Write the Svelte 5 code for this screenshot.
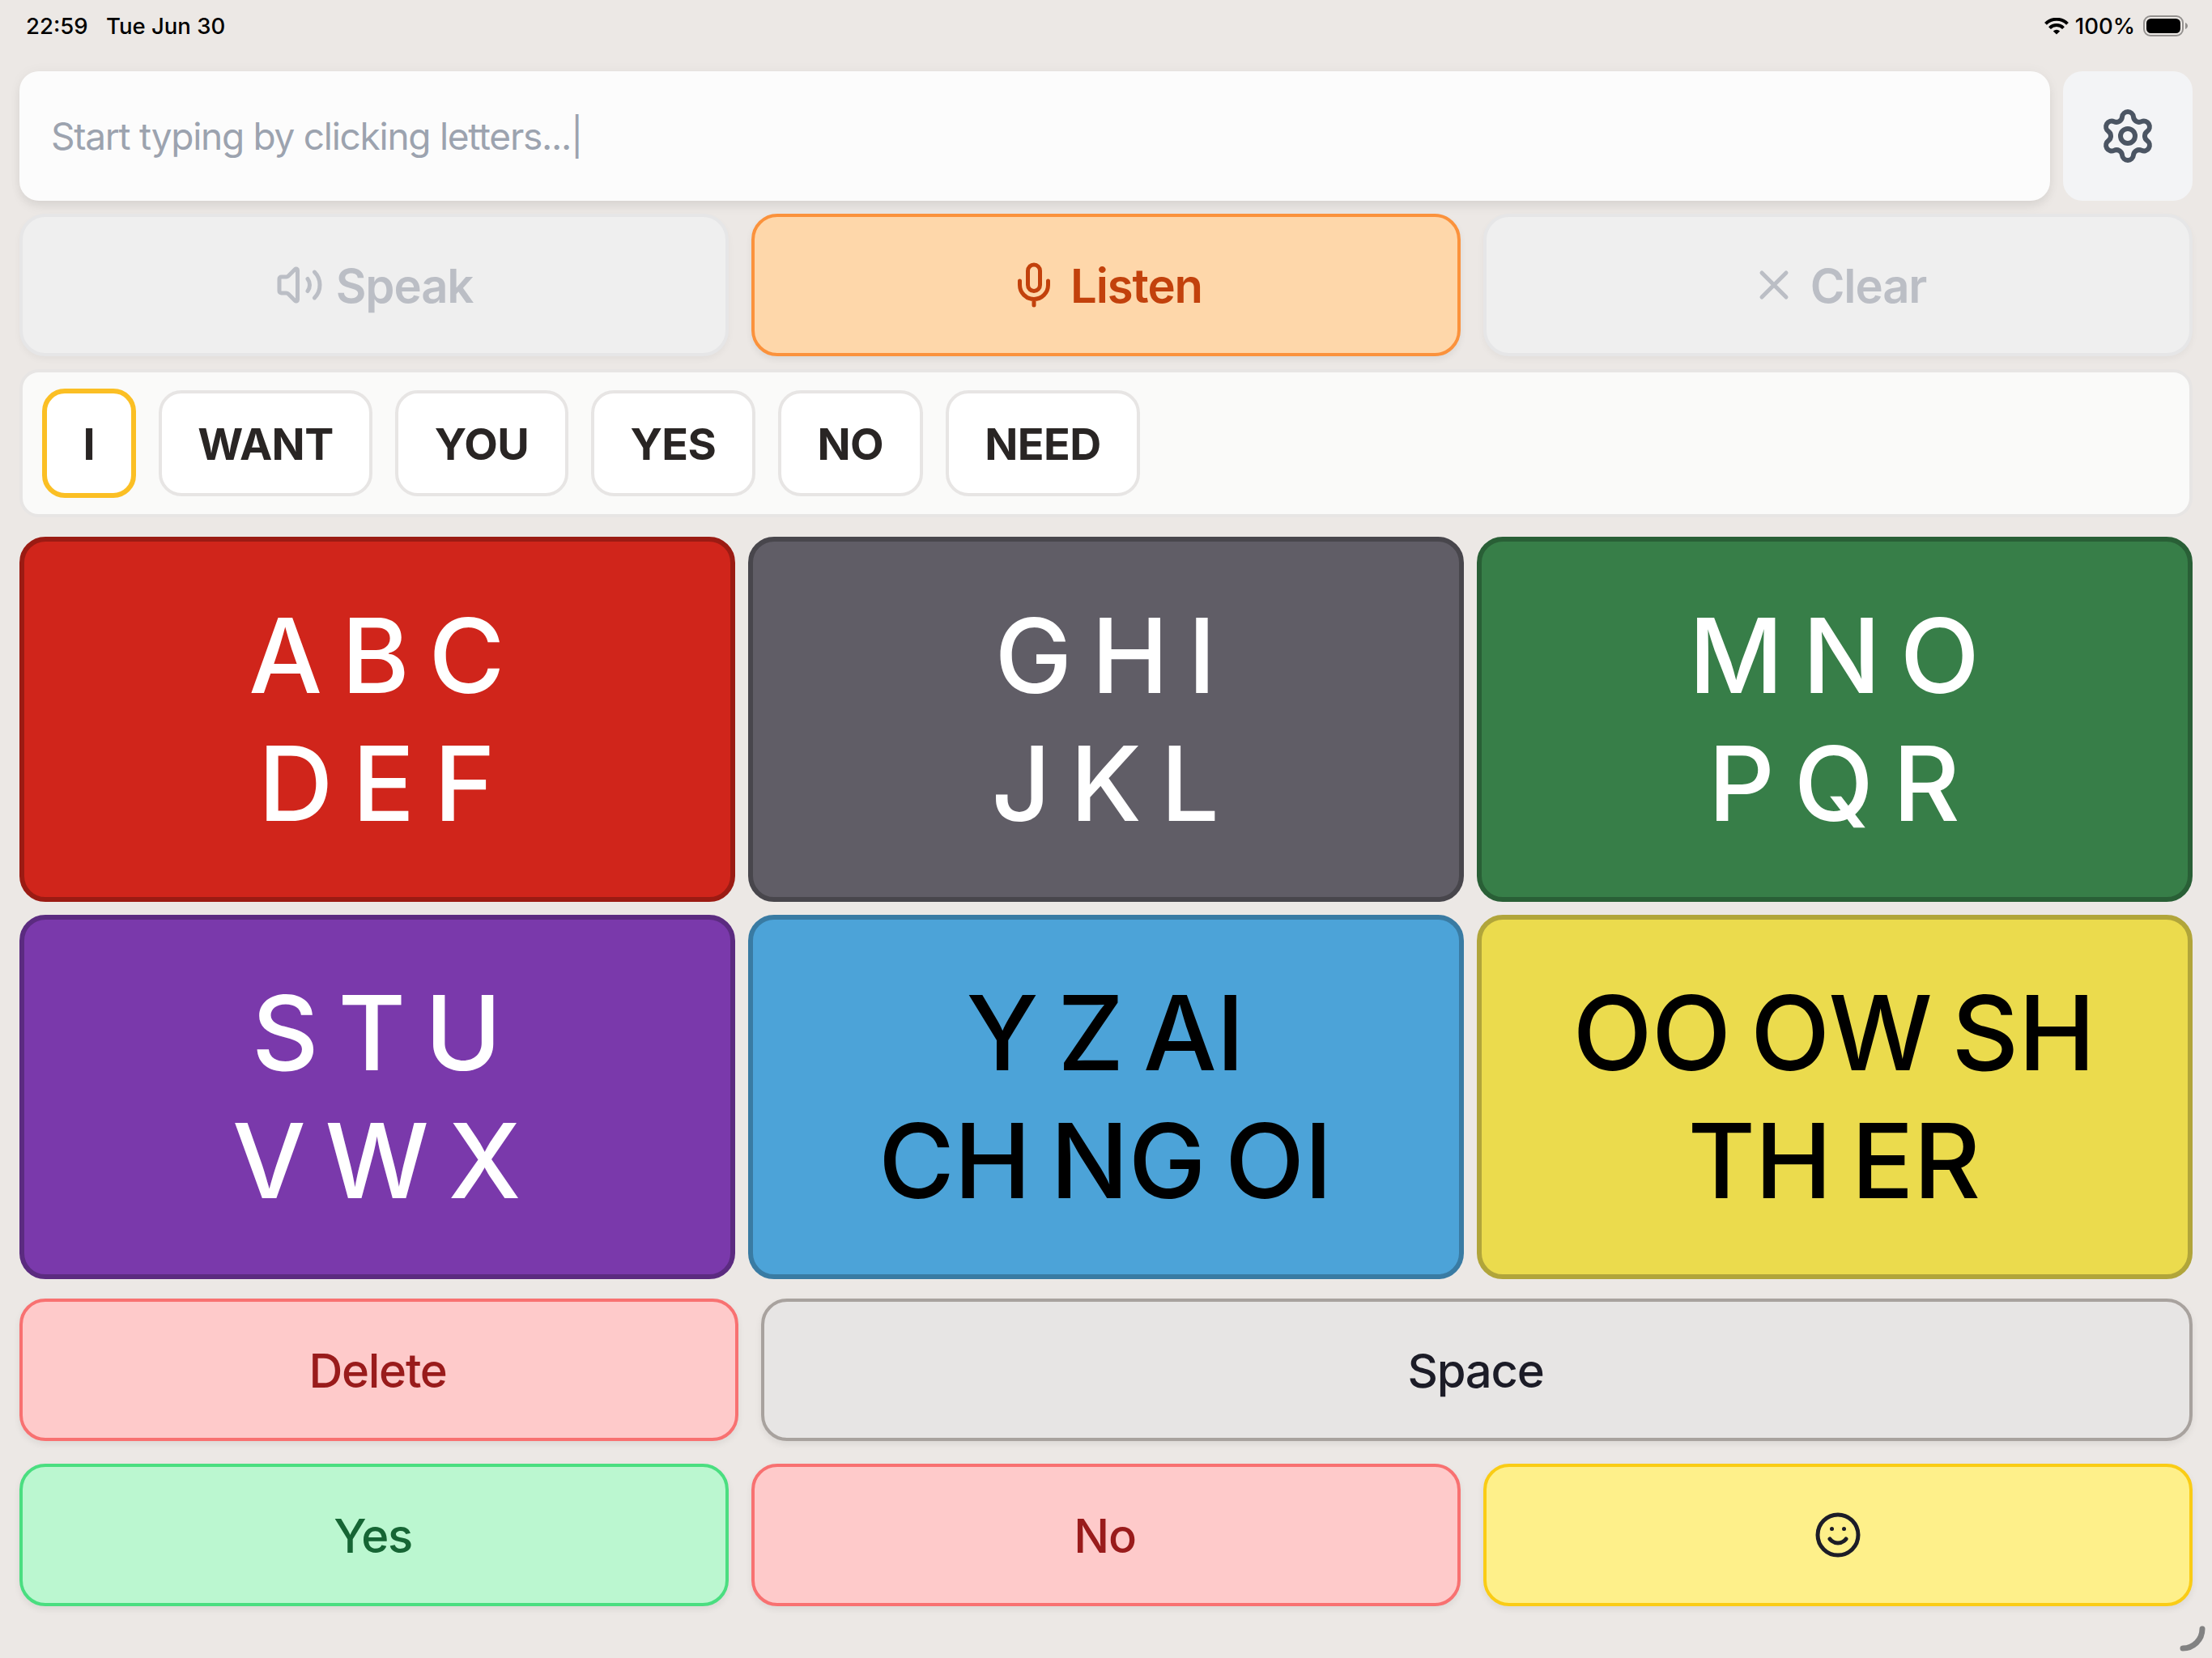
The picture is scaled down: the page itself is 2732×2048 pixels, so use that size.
<script lang="ts">
	interface KeyGroup {
		name: string;
		lines: string[];
	}

	const suggestions = ['I', 'WANT', 'YOU', 'YES', 'NO', 'NEED'];

	const groups: KeyGroup[] = [
		{ name: 'red', lines: ['A B C', 'D E F'] },
		{ name: 'gray', lines: ['G H I', 'J K L'] },
		{ name: 'green', lines: ['M N O', 'P Q R'] },
		{ name: 'purple', lines: ['S T U', 'V W X'] },
		{ name: 'blue', lines: ['Y Z AI', 'CH NG OI'] },
		{ name: 'yellow', lines: ['OO OW SH', 'TH ER'] }
	];

	let text = $state('');
	let highlighted = $state(0);
</script>

<div class="screen">
	<header class="status">
		<span class="time">22:59</span>
		<span class="date">Tue Jun 30</span>
		<svg class="wifi" viewBox="0 0 30 21">
			<path d="M1.500 7.400a18.900 18.900 0 0 1 27 0" />
			<path d="M6.500 12.600a11.900 11.900 0 0 1 17 0" />
			<path class="dot" d="M15 20.500l-4.200-4a6 6 0 0 1 8.400 0z" />
		</svg>
		<span class="percent">100%</span>
		<svg class="battery" viewBox="0 0 56 26">
			<rect class="shell" x="1" y="1" width="48" height="24" rx="8" />
			<rect x="4" y="4" width="42" height="18" rx="5.5" />
			<path class="cap" d="M52 9c4 1.500 4 6.500 0 8z" />
		</svg>
	</header>

	<main>
		<div class="top">
			<div class="input">
				{#if text}{text}{:else}<span class="placeholder">Start typing by clicking letters...|</span>{/if}
			</div>
			<button class="settings" aria-label="Settings">
				<svg viewBox="0 0 24 24">
					<path d="M9.671 4.136a2.340 2.340 0 0 1 4.659 0 2.340 2.340 0 0 0 3.319 1.915 2.340 2.340 0 0 1 2.330 4.033 2.340 2.340 0 0 0 0 3.831 2.340 2.340 0 0 1-2.330 4.033 2.340 2.340 0 0 0-3.319 1.915 2.340 2.340 0 0 1-4.659 0 2.340 2.340 0 0 0-3.320-1.915 2.340 2.340 0 0 1-2.330-4.033 2.340 2.340 0 0 0 0-3.831A2.340 2.340 0 0 1 6.350 6.051a2.340 2.340 0 0 0 3.319-1.915" />
					<circle cx="12" cy="12" r="3" />
				</svg>
			</button>
		</div>

		<div class="row actions">
			<button class="action" disabled>
				<svg class="speaker" viewBox="0 0 24 24">
					<path d="M11 4.702a.705.705 0 0 0-1.203-.498L6.413 7.587A1.400 1.400 0 0 1 5.416 8H3a1 1 0 0 0-1 1v6a1 1 0 0 0 1 1h2.416a1.400 1.400 0 0 1 .997.413l3.383 3.384A.705.705 0 0 0 11 19.298z" />
					<path d="M16 9a5 5 0 0 1 0 6M19.364 18.364a9 9 0 0 0 0-12.728" />
				</svg>
				<span>Speak</span>
			</button>
			<button class="action listen">
				<svg class="mic" viewBox="0 0 24 24">
					<path d="M12 19v3M19 10v2a7 7 0 0 1-14 0v-2" />
					<rect x="9" y="2" width="6" height="13" rx="3" />
				</svg>
				<span>Listen</span>
			</button>
			<button class="action" disabled>
				<svg class="cross" viewBox="0 0 24 24">
					<path d="M18 6 6 18M6 6l12 12" />
				</svg>
				<span>Clear</span>
			</button>
		</div>

		<div class="suggestions">
			{#each suggestions as word, i}
				<button class="chip" class:highlighted={i === highlighted}>{word}</button>
			{/each}
		</div>

		<div class="groups">
			{#each groups as group}
				<button class="group {group.name}">
					{#each group.lines as line}
						<span>{line}</span>
					{/each}
				</button>
			{/each}
		</div>

		<div class="row editing">
			<button class="key danger">Delete</button>
			<button class="key space">Space</button>
		</div>

		<div class="row">
			<button class="key yes">Yes</button>
			<button class="key danger">No</button>
			<button class="key emoji" aria-label="Emoji">
				<svg viewBox="0 0 24 24">
					<circle cx="12" cy="12" r="10" />
					<path d="M8 14s1.500 2 4 2 4-2 4-2M9 9h.01M15 9h.01" />
				</svg>
			</button>
		</div>
	</main>

	<svg class="corner" viewBox="0 0 32 32">
		<path d="M28 4A24 24 0 0 1 4 28" />
	</svg>
</div>

<style>
	:global(body) {
		background: #ece8e5;
	}

	.screen {
		position: relative;
		box-sizing: border-box;
		width: 2732px;
		height: 2048px;
		background: #ece8e5;
		font-family: Inter, 'Liberation Sans', sans-serif;
		overflow: hidden;
	}

	button {
		box-sizing: border-box;
		margin: 0;
		padding: 0;
		font-family: inherit;
		color: inherit;
	}

	svg {
		flex: none;
		fill: none;
		stroke: currentColor;
		stroke-width: 2;
		stroke-linecap: round;
		stroke-linejoin: round;
	}

	.status {
		display: flex;
		align-items: center;
		box-sizing: border-box;
		height: 88px;
		padding: 0 29px 24px 32px;
		font-size: 27.5px;
		font-weight: 500;
		color: #000;
	}

	.time {
		width: 99px;
	}

	.wifi {
		width: 30px;
		height: 21px;
		margin-left: auto;
		stroke-width: 4;
		stroke-linecap: butt;
	}

	.wifi .dot {
		fill: #000;
		stroke: none;
	}

	.percent {
		margin: 0 10px 0 8px;
	}

	.battery {
		width: 56px;
		height: 26px;
		fill: #000;
		stroke: none;
	}

	.battery .shell {
		fill: none;
		stroke: #94918f;
		stroke-width: 2;
	}

	.battery .cap {
		fill: #94918f;
	}

	main {
		padding: 0 24px;
	}

	.top {
		display: flex;
		gap: 16px;
		height: 160px;
		margin-bottom: 16px;
	}

	.input {
		flex: 1;
		display: flex;
		align-items: center;
		padding-left: 39px;
		border-radius: 24px;
		background: #fcfcfc;
		box-shadow: 0 8px 14px -2px rgba(0, 0, 0, 0.08), 0 0 16px rgba(0, 0, 0, 0.04);
		font-size: 46px;
		letter-spacing: -1.27px;
	}

	.placeholder {
		color: #9ca3af;
	}

	.settings {
		display: grid;
		place-items: center;
		width: 160px;
		border: 0;
		border-radius: 24px;
		background: #f3f4f6;
		color: #4b5563;
	}

	.settings svg {
		width: 72px;
		height: 72px;
	}

	.row {
		display: grid;
		grid-template-columns: repeat(3, 1fr);
		gap: 28px;
		height: 176px;
	}

	.action,
	.key {
		display: flex;
		align-items: center;
		justify-content: center;
		border: 4px solid;
		border-radius: 32px;
		box-shadow: 0 4px 8px rgba(0, 0, 0, 0.07);
		font-size: 58px;
		font-weight: 500;
		letter-spacing: -1.3px;
	}

	.key {
		padding: 2px 3px 0 0;
	}

	.action {
		border-color: #e6e6e7;
		background: #efefef;
		box-shadow: 0 4px 8px rgba(0, 0, 0, 0.04);
		color: #bbbec5;
		font-weight: 600;
		letter-spacing: -1.1px;
	}

	.action span {
		padding-top: 2px;
	}

	.listen {
		border-color: #fb923c;
		background: #fed7aa;
		box-shadow: 0 4px 8px rgba(0, 0, 0, 0.07);
		color: #c2410c;
	}

	.action svg {
		width: 60px;
		height: 60px;
		margin-right: 15px;
	}

	.suggestions {
		display: flex;
		align-items: center;
		gap: 28px;
		box-sizing: border-box;
		height: 183px;
		margin: 16px 0 24px;
		padding: 0 24px;
		border: 4px solid #e7e5e4;
		border-radius: 24px;
		background: #fafaf9;
	}

	.chip {
		height: 131px;
		padding: 2px 44.6px 0;
		border: 4px solid #e7e5e4;
		border-radius: 28px;
		background: #fff;
		font-size: 54px;
		font-weight: 700;
		letter-spacing: -0.6px;
		color: #292524;
	}

	.chip.highlighted {
		height: 135px;
		border: 6px solid #fbbf24;
	}

	.groups {
		display: grid;
		grid-template-columns: repeat(3, 1fr);
		grid-template-rows: 451px 450px;
		gap: 16px;
		margin-bottom: 24px;
	}

	.group {
		display: flex;
		flex-direction: column;
		align-items: center;
		justify-content: center;
		padding-right: 2px;
		border: 6px solid;
		border-radius: 32px;
		font-size: 128px;
		font-weight: 500;
		line-height: 158px;
		letter-spacing: -0.5px;
		word-spacing: -9.4px;
		color: #fff;
	}

	.red {
		border-color: #9b1b13;
		background: #d0251b;
	}

	.gray {
		border-color: #48464c;
		background: #605d66;
	}

	.green {
		border-color: #295f36;
		background: #377e48;
	}

	.purple {
		border-color: #5b2b80;
		background: #7a39ab;
	}

	.blue {
		border-color: #397ba3;
		background: #4ca3d8;
		color: #000;
	}

	.yellow {
		border-color: #b1a53a;
		background: #ebdb4d;
		color: #000;
	}

	.editing {
		grid-template-columns: 888px 1fr;
		margin-bottom: 28px;
	}

	.danger {
		border-color: #f87171;
		background: #fecaca;
		color: #991b1b;
	}

	.space {
		border-color: #a8a29e;
		background: #e7e5e4;
		color: #1c1c27;
	}

	.yes {
		border-color: #4ade80;
		background: #bbf7d0;
		color: #166534;
	}

	.emoji {
		padding: 0;
		border-color: #facc15;
		background: #fef08a;
		color: #1c1c27;
	}

	.emoji svg {
		width: 60px;
		height: 60px;
	}

	.corner {
		position: absolute;
		right: 8px;
		bottom: 8px;
		width: 32px;
		height: 32px;
		color: #828282;
		stroke-width: 7;
	}
</style>
